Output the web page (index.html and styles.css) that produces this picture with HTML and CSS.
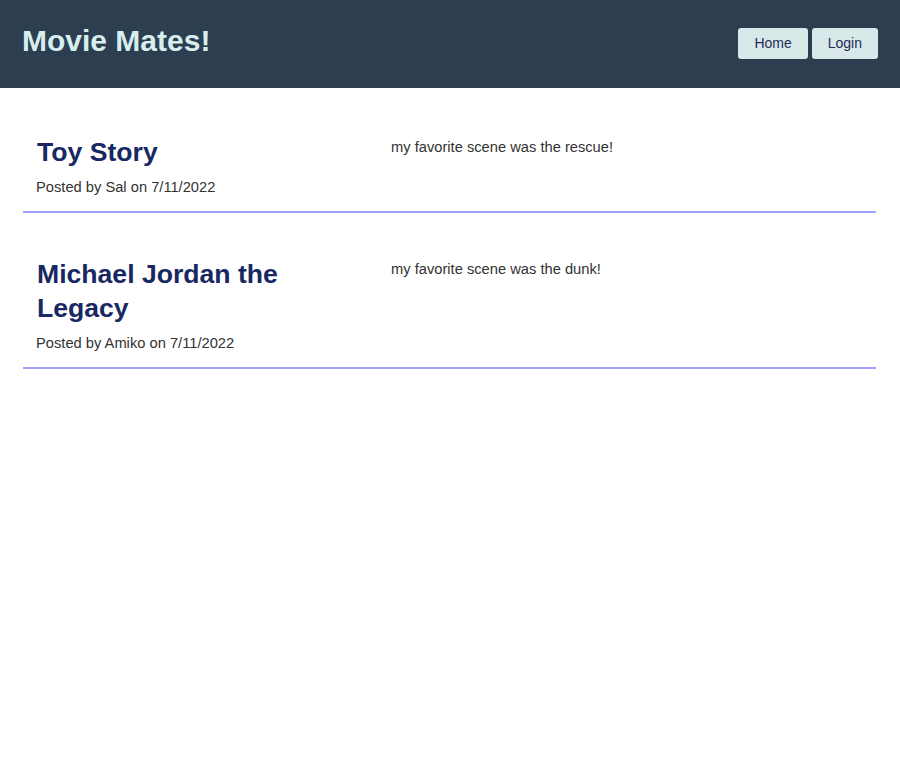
FILE: index.html
```html
<!DOCTYPE html>
<html lang="en">
<head>
<meta charset="utf-8">
<title>Movie Mates!</title>
<link rel="stylesheet" href="styles.css">
</head>
<body>
<header class="site-header">
  <h1 class="site-title">Movie Mates!</h1>
  <nav class="nav">
    <button class="nav-btn">Home</button>
    <button class="nav-btn">Login</button>
  </nav>
</header>
<main class="posts">
  <article class="post">
    <div class="post-meta">
      <h2 class="post-title">Toy Story</h2>
      <p class="post-by">Posted by Sal on 7/11/2022</p>
    </div>
    <p class="post-body">my favorite scene was the rescue!</p>
  </article>
  <article class="post">
    <div class="post-meta">
      <h2 class="post-title">Michael Jordan the Legacy</h2>
      <p class="post-by">Posted by Amiko on 7/11/2022</p>
    </div>
    <p class="post-body">my favorite scene was the dunk!</p>
  </article>
</main>
</body>
</html>
```
FILE: styles.css
```css
* { box-sizing: border-box; }
html, body {
  margin: 0;
  padding: 0;
  background: #ffffff;
  font-family: "Liberation Sans", Arial, sans-serif;
}
.site-header {
  height: 88px;
  background: #2d3e50;
  display: flex;
  justify-content: space-between;
  align-items: flex-start;
  padding: 0 22px;
}
.site-title {
  margin: 0;
  padding-top: 24px;
  font-size: 30px;
  line-height: 34px;
  font-weight: bold;
  color: #d7eeee;
}
.nav {
  display: flex;
  gap: 4px;
  padding-top: 28px;
}
.nav-btn {
  font-family: "Liberation Sans", Arial, sans-serif;
  font-size: 14px;
  line-height: 17px;
  padding: 7px 16px;
  background: #d9e8e8;
  color: #1f2d5a;
  border: none;
  border-radius: 3px;
  cursor: pointer;
}
.posts {
  padding: 24px 24px 0 23px;
}
.post {
  display: flex;
  gap: 35px;
  padding: 23px 13px 15px;
  border-bottom: 2px solid #a0a0ff;
  margin-bottom: 21px;
}
.post-meta {
  width: 320px;
  flex: 0 0 320px;
}
.post-title {
  margin: 0 0 0 1px;
  font-size: 26.6px;
  line-height: 34px;
  font-weight: bold;
  color: #172862;
}
.post-by {
  margin: 10px 0 0;
  font-size: 14.7px;
  line-height: 17px;
  color: #333333;
}
.post-body {
  margin: 4px 0 0;
  font-size: 14.7px;
  line-height: 17px;
  color: #333333;
}
```
